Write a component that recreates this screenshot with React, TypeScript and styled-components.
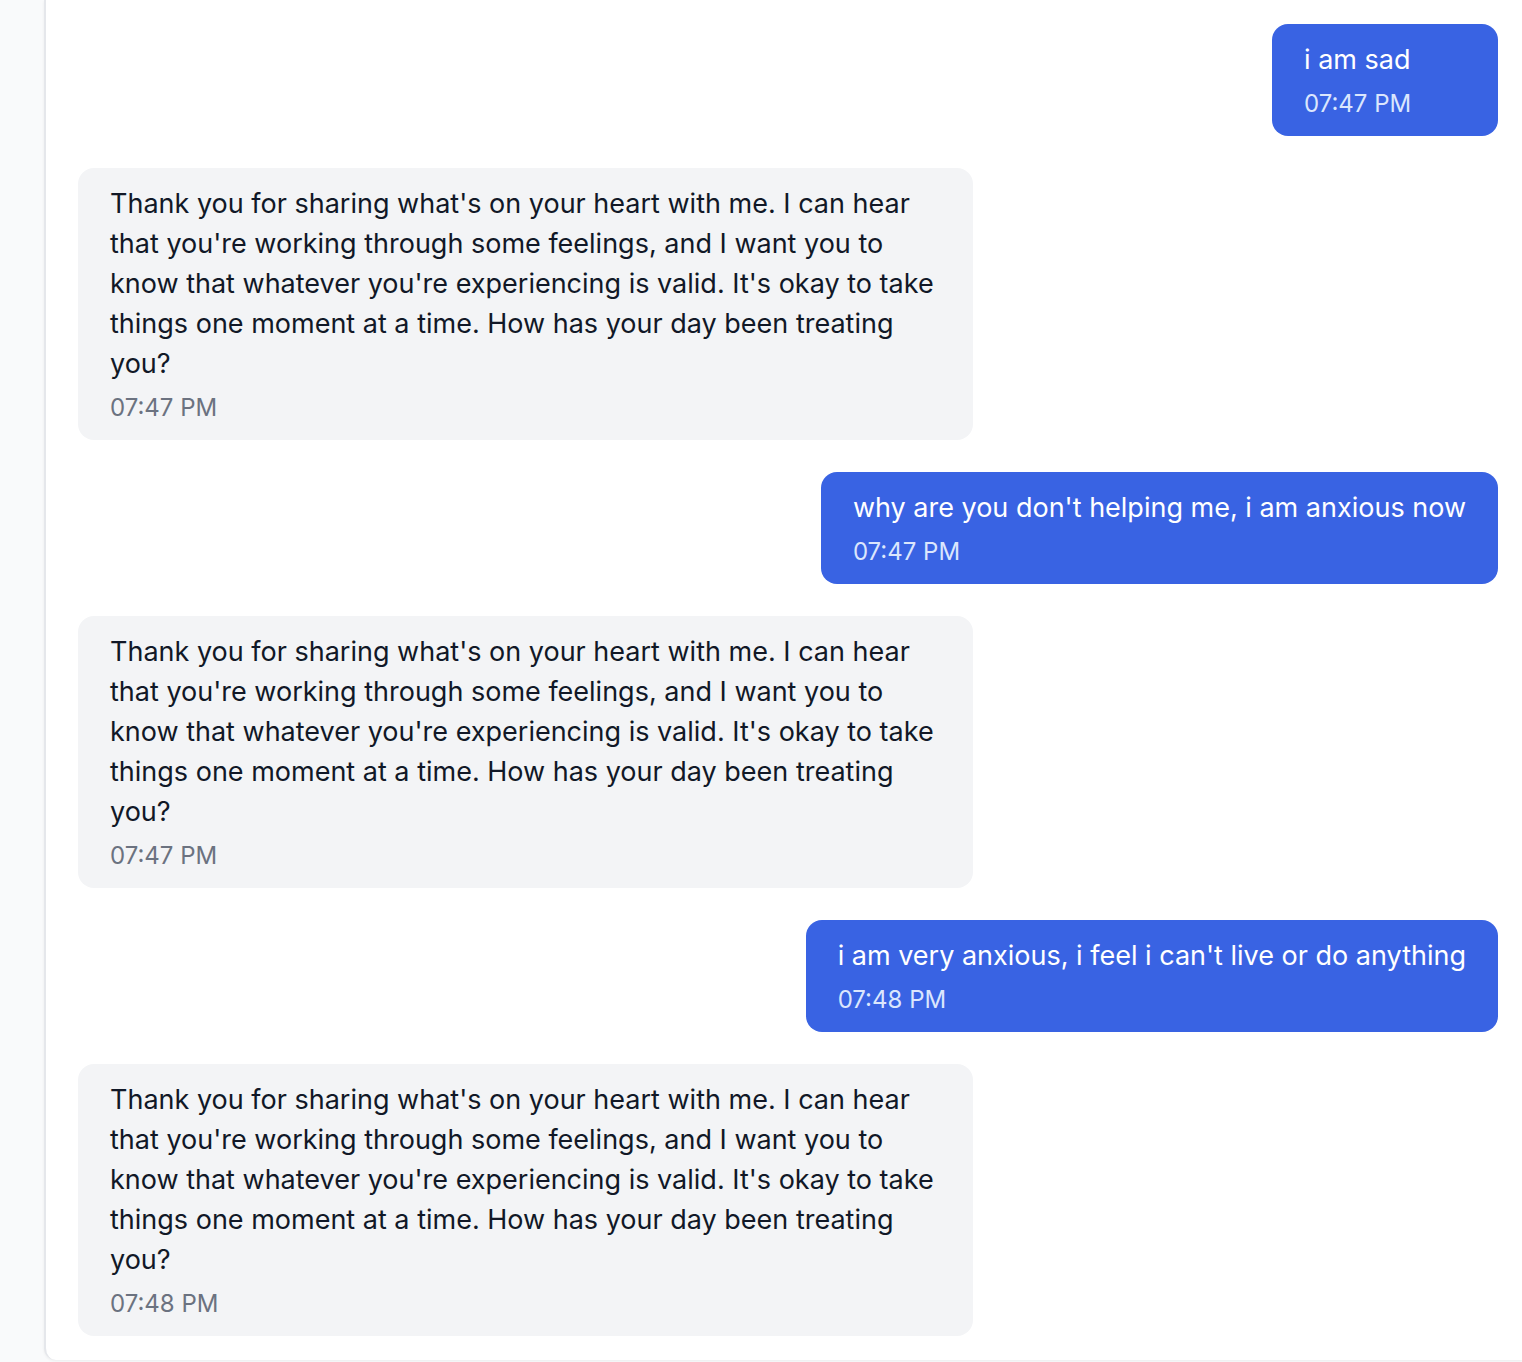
import React from "react";
import styled, { createGlobalStyle } from "styled-components";

const GlobalStyle = createGlobalStyle`
  html, body { margin: 0; padding: 0; background: #ffffff; }
  body { font-family: Inter, "Noto Sans", "Liberation Sans", sans-serif; -webkit-font-smoothing: antialiased; }
  * { box-sizing: border-box; }
`;

const Layout = styled.div`
  display: flex;
  width: 1522px;
  height: 1362px;
  overflow: hidden;
  background: #f9fafb;
`;

const Sidebar = styled.aside`
  flex: 0 0 44px;
  background: #f9fafb;
`;

const Panel = styled.main`
  flex: 1;
  height: 1360px;
  background: #ffffff;
  border-left: 2px solid #e5e7eb;
  border-bottom-left-radius: 12px;
  box-shadow: 0 1px 3px rgba(0, 0, 0, 0.06);
  display: flex;
  flex-direction: column;
  gap: 32px;
  padding: 24px 24px 0 32px;
  overflow: hidden;
`;

const Row = styled.div<{ $mine: boolean }>`
  display: flex;
  justify-content: ${(p) => (p.$mine ? "flex-end" : "flex-start")};
`;

const Bubble = styled.div<{ $mine: boolean }>`
  max-width: 895px;
  min-width: ${(p) => (p.$mine ? "226px" : "0")};
  padding: 16px 32px;
  border-radius: 16px;
  background: ${(p) => (p.$mine ? "#3963e3" : "#f3f4f6")};
  color: ${(p) => (p.$mine ? "#ffffff" : "#111827")};
`;

const Text = styled.p`
  margin: 0;
  font-size: 27px;
  line-height: 40px;
  font-weight: 400;
`;

const Time = styled.div<{ $mine: boolean }>`
  margin-top: 8px;
  font-size: 24px;
  line-height: 32px;
  color: ${(p) => (p.$mine ? "#dbe6fd" : "#6b7280")};
`;

const reply =
  "Thank you for sharing what's on your heart with me. I can hear that you're working through some feelings, and I want you to know that whatever you're experiencing is valid. It's okay to take things one moment at a time. How has your day been treating you?";

const messages = [
  { mine: true, text: "i am sad", time: "07:47 PM" },
  { mine: false, text: reply, time: "07:47 PM" },
  { mine: true, text: "why are you don't helping me, i am anxious now", time: "07:47 PM" },
  { mine: false, text: reply, time: "07:47 PM" },
  { mine: true, text: "i am very anxious, i feel i can't live or do anything", time: "07:48 PM" },
  { mine: false, text: reply, time: "07:48 PM" },
];

export default function App() {
  return (
    <>
      <GlobalStyle />
      <Layout>
        <Sidebar />
        <Panel>
          {messages.map((m, i) => (
            <Row key={i} $mine={m.mine}>
              <Bubble $mine={m.mine}>
                <Text>{m.text}</Text>
                <Time $mine={m.mine}>{m.time}</Time>
              </Bubble>
            </Row>
          ))}
        </Panel>
      </Layout>
    </>
  );
}
